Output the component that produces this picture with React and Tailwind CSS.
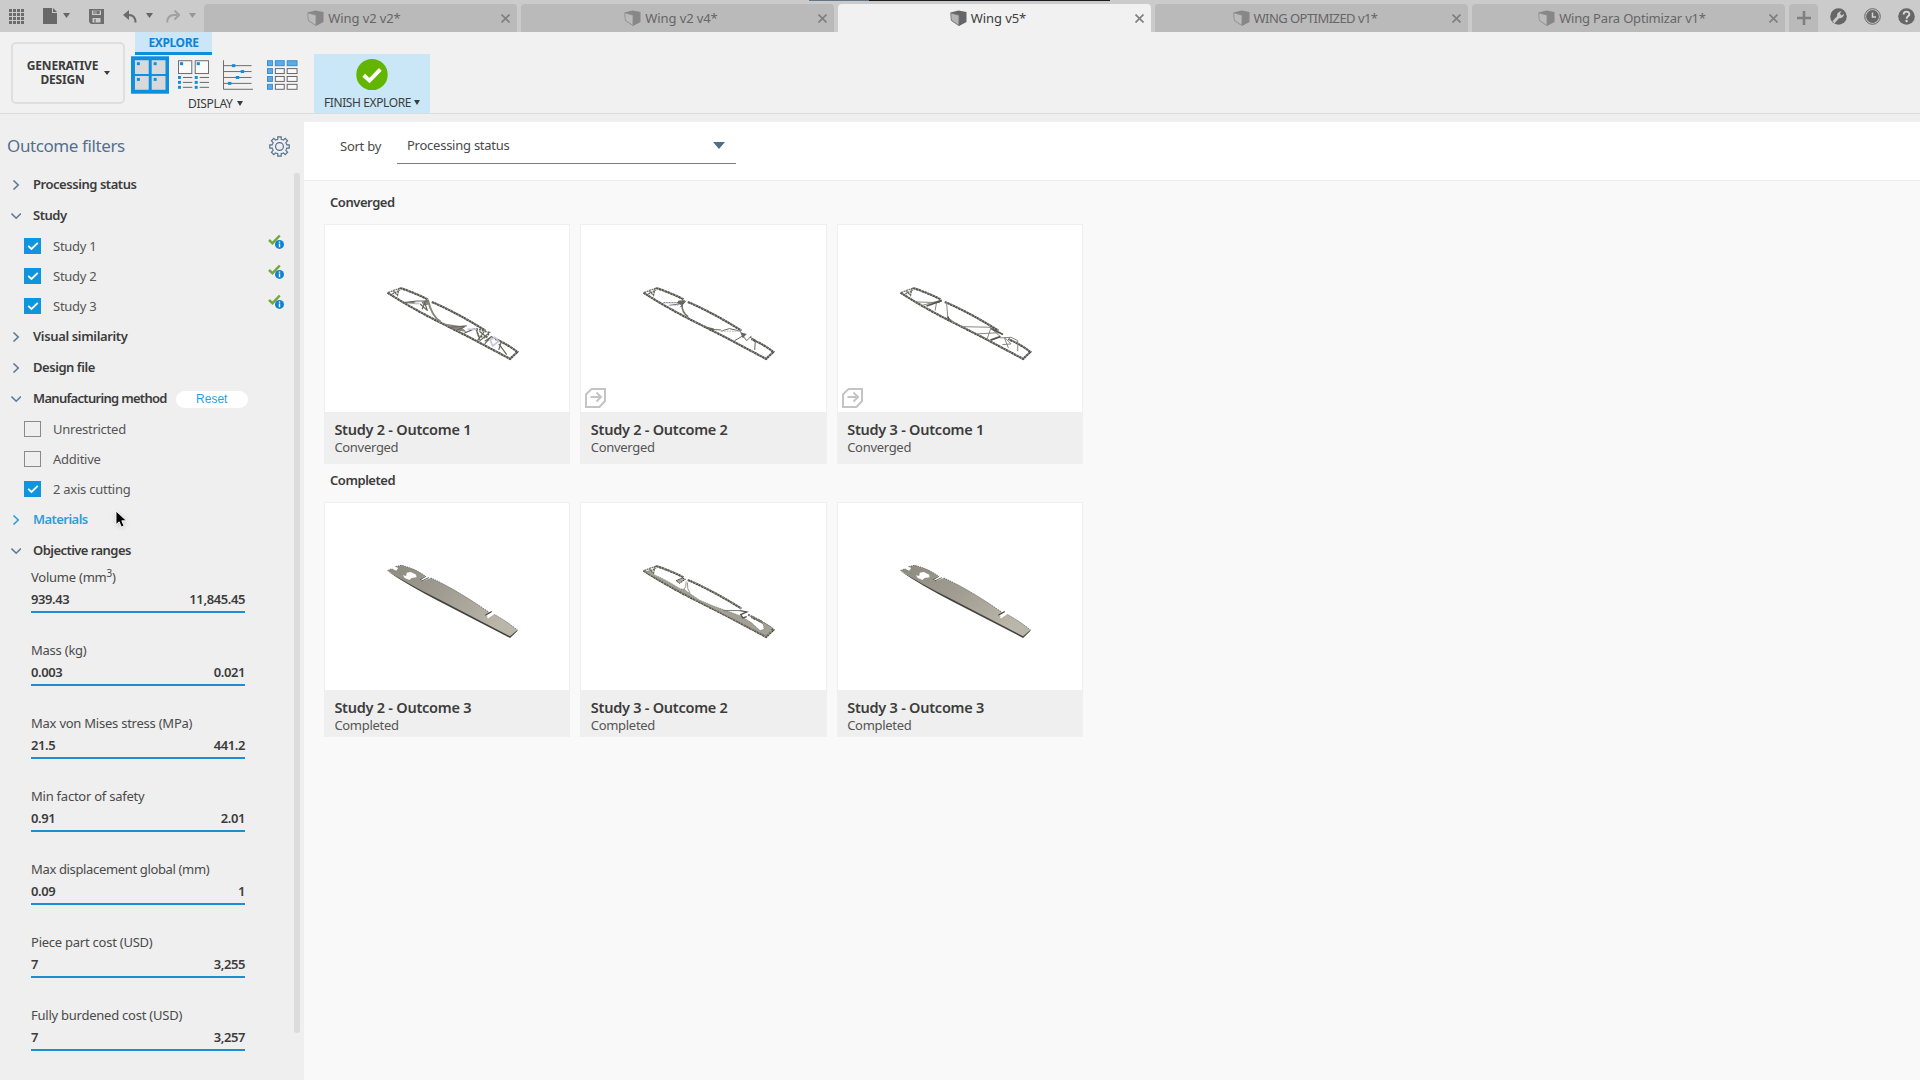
import React from "react";

const TABS = [
  { title: "Wing v2 v2*", tracking: "tracking-[-0.1px]" },
  { title: "Wing v2 v4*", tracking: "tracking-[-0.1px]" },
  { title: "Wing v5*", active: true, tracking: "tracking-[-0.1px]" },
  { title: "WING OPTIMIZED v1*", tracking: "tracking-[-0.55px]" },
  { title: "Wing Para Optimizar v1*", tracking: "tracking-[-0.18px]" },
];

const RANGES = [
  { label: <>Volume (mm<sup className="text-[10px]">3</sup>)</>, min: "939.43", max: "11,845.45" },
  { label: "Mass (kg)", min: "0.003", max: "0.021" },
  { label: "Max von Mises stress (MPa)", min: "21.5", max: "441.2" },
  { label: "Min factor of safety", min: "0.91", max: "2.01" },
  { label: "Max displacement global (mm)", min: "0.09", max: "1", tracking: "tracking-[-0.35px]" },
  { label: "Piece part cost (USD)", min: "7", max: "3,255" },
  { label: "Fully burdened cost (USD)", min: "7", max: "3,257" },
];

function Caret({ className = "" }) {
  return (
    <svg viewBox="0 0 8 5" className={className} fill="currentColor" preserveAspectRatio="none">
      <path d="M0 0H8L4 5Z" />
    </svg>
  );
}

function Cube({ active }) {
  return (
    <svg width="17" height="17" viewBox="0 0 17 17" className={active ? "" : "opacity-60"}>
      <path d="M0.5 2.5 8.5 0.5 16.5 2 16.5 12 9 16 1 10.5Z" fill="#666" />
      <path d="M0.8 3 9 5.2 8.8 15.4 1.3 10.3Z" fill={active ? "#b4b4b4" : "#bdbdbd"} stroke="#777" strokeWidth="0.7" />
    </svg>
  );
}

function TopBar() {
  return (
    <header className="relative flex h-8 bg-[#cbcbcb] text-[#666]">
      <div className="flex w-[204px] shrink-0 items-center">
        <svg width="15" height="15" viewBox="0 0 15 15" className="ml-[9px]" fill="#6b6b6b">
          {[0, 4, 8, 12].map((y) => [0, 4, 8, 12].map((x) => <rect key={`${x}-${y}`} x={x} y={y} width="3" height="3" />))}
        </svg>
        <svg width="14" height="16" viewBox="0 0 14 16" className="ml-[19px]" fill="#686868">
          <path d="M0 0H9V5H14V16H0Z M10 0 14 4H10Z" />
        </svg>
        <Caret className="mb-0.5 ml-1.5 h-[5px] w-[7px]" />
        <svg width="15" height="15" viewBox="0 0 15 15" className="ml-[19px]" fill="#6e6e6e">
          <path fillRule="evenodd" d="M0 0H15V15H2L0 13Z M3 1.5V6H12V1.5Z M3.5 9V13.5H11.5V9Z" />
          <path d="M4 1.5H11V5H4Z M5 10H7V13.5H5Z" opacity="0.6" />
          <path d="M8 2H10V5H8Z" />
        </svg>
        <svg width="14" height="13" viewBox="0 0 14 13" className="ml-[19px]" fill="none" stroke="#6b6b6b" strokeWidth="2.2">
          <path d="M12.5 12.5C12.6 7.5 10 5 6 5H3" />
          <path d="M6 0 0 5 6 10Z" fill="#6b6b6b" stroke="none" />
        </svg>
        <Caret className="mb-0.5 ml-[9px] h-[5px] w-[7px]" />
        <svg width="14" height="13" viewBox="0 0 14 13" className="ml-[13px]" fill="none" stroke="#a0a0a0" strokeWidth="2">
          <path d="M1.2 12.5C1.2 7.5 4 5 8 5H11" />
          <path d="M8.5 0.5 13 5 8.5 9.5" />
        </svg>
        <Caret className="mb-0.5 ml-[9px] h-[5px] w-[7px] text-[#979797]" />
      </div>
      <div className="flex shrink-0 gap-1 pt-1">
        {TABS.map((t) => (
          <div
            key={t.title}
            className={`relative flex w-[313px] items-center justify-center rounded-t-[4px] pt-px text-[13px] ${
              t.active ? "bg-[#f1f1f1] text-[#3c3c3c]" : "bg-[#bababa] text-[#666]"
            }`}
          >
            <div className="mr-[13px] flex items-center gap-1">
              <Cube active={t.active} />
              <span className={`whitespace-nowrap ${t.tracking}`}>{t.title}</span>
            </div>
            <svg width="9" height="9" viewBox="0 0 9 9" className="absolute right-[7px] top-[10px]" fill="none" stroke="#808080" strokeWidth="1.7">
              <path d="M0.5 0.5 8.5 8.5M8.5 0.5 0.5 8.5" />
            </svg>
          </div>
        ))}
        <div className="flex w-[29px] items-center justify-center rounded-t-[4px] bg-[#bababa]">
          <svg width="14" height="14" viewBox="0 0 14 14" fill="#808080">
            <path d="M5.7 0H8.3V5.7H14V8.3H8.3V14H5.7V8.3H0V5.7H5.7Z" />
          </svg>
        </div>
      </div>
      <div className="flex items-center gap-[17px] pl-[12px]">
        <svg width="17" height="17" viewBox="0 0 17 17">
          <circle cx="8.5" cy="8.5" r="8.3" fill="#666" />
          <path d="M3.5 14.2 8.5 8.8" stroke="#cbcbcb" strokeWidth="2.8" />
          <path d="M7.3 8.5C6.4 5.5 8.6 3 11.6 3.5L9.9 5.5 11.6 7.4 13.7 5.8C14.2 8.7 11.5 10.9 8.8 9.9Z" fill="#cbcbcb" />
        </svg>
        <svg width="17" height="17" viewBox="0 0 17 17" fill="none">
          <circle cx="8.5" cy="8.5" r="7.8" stroke="#666" strokeWidth="1" />
          <circle cx="8.5" cy="8.5" r="6.4" fill="#666" />
          <path d="M8.5 4.5V9H12" stroke="#d5d5d5" strokeWidth="1.5" />
        </svg>
        <svg width="17" height="17" viewBox="0 0 17 17" fill="none">
          <circle cx="8.5" cy="8.5" r="8.3" fill="#666" />
          <path d="M5.6 6.5C5.6 2.6 11.4 2.8 11.4 6.2 11.4 8.3 8.6 8.3 8.6 10.7" stroke="#d8d8d8" strokeWidth="1.9" />
          <circle cx="8.6" cy="13" r="1.2" fill="#d8d8d8" />
        </svg>
      </div>
      <div className="absolute left-[809px] top-0 flex h-px w-[301px]">
        <div className="w-[60px] bg-[#627784]" />
        <div className="flex-1 bg-[#1c1a1e]" />
      </div>
    </header>
  );
}

function DisplayIcons() {
  return (
    <div className="flex h-[38px]">
      <svg width="39" height="38" viewBox="0 0 39 38">
        <rect width="39" height="38" fill="#0d8fe0" />
        {[[4, 4], [21, 4], [4, 20], [21, 20]].map(([x, y]) => (
          <g key={`${x}-${y}`}>
            <rect x={x} y={y} width="14" height="14" fill="#d9d9d9" />
            <rect x={x + 2} y={y + 2} width="3" height="3" fill="#0d8fe0" />
          </g>
        ))}
      </svg>
      <svg width="32" height="31" viewBox="0 0 32 31" className="ml-[9px] mt-[4px]">
        {[0, 17].map((x) => (
          <g key={x}>
            <rect x={x + 0.5} y="0.5" width="13.5" height="13" fill="#fafafa" stroke="#6b6b6b" />
            <rect x={x + 2} y="2" width="3.2" height="3" fill="#0d8fe0" />
            {[16, 21, 26].map((y) => (
              <g key={y}>
                <rect x={x} y={y} width="3" height="3" fill="#0d8fe0" />
                <rect x={x + 5} y={y + 1} width="9.5" height="1" fill="#666" />
              </g>
            ))}
          </g>
        ))}
      </svg>
      <svg width="31" height="31" viewBox="0 0 31 31" className="ml-[13px] mt-[4px]">
        <path d="M0.5 0V29.5H31M1 5.5H29M1 11.5H29M1 17.5H29M1 23.5H29" fill="none" stroke="#6b6b6b" />
        {[[9, 4], [18, 10], [13, 16], [5, 22]].map(([x, y]) => (
          <rect key={y} x={x} y={y} width="3.5" height="3" fill="#0d8fe0" />
        ))}
      </svg>
      <svg width="32" height="31" viewBox="0 0 32 31" className="ml-[14px] mt-[4px]">
        {[0, 8, 16, 24].map((y) => (
          <g key={y}>
            <rect x="0.5" y={y + 0.5} width="5" height="5" fill="#5aabe8" stroke="#3b8ccc" />
            <rect x="8.5" y={y + 0.5} width="9" height="5" fill={y ? "#f8f8f8" : "#5aabe8"} stroke={y ? "#666" : "#3b8ccc"} />
            <rect x="20.5" y={y + 0.5} width="10" height="5" fill={y ? "#f8f8f8" : "#5aabe8"} stroke={y ? "#666" : "#3b8ccc"} />
          </g>
        ))}
      </svg>
    </div>
  );
}

function Ribbon() {
  return (
    <div className="flex h-[82px] border-b border-[#dcdcdc] bg-[#f1f1f1] text-[#3c3c3c]">
      <div className="ml-[11px] mt-[10px] flex h-[62px] w-[114px] items-center rounded-[5px] border-2 border-[#dfdfdf] pl-[12px]">
        <div className="w-[75px] text-center text-[12px] font-bold leading-[14px] tracking-[-0.2px]">
          GENERATIVE
          <br />
          DESIGN
        </div>
        <Caret className="ml-[4px] h-[4px] w-[6px]" />
      </div>
      <div className="ml-[6px] w-[168px]">
        <div className="ml-[4px] flex h-[23px] w-[77px] items-center justify-center border-b-[3px] border-[#0d8fdc] bg-[#cbe7f7] pt-[2px] text-[12px] font-bold tracking-[-0.4px] text-[#0d84d8]">
          EXPLORE
        </div>
        <div className="mt-px">
          <DisplayIcons />
        </div>
        <div className="flex h-[20px] items-center pl-[57px] text-[12px] tracking-[-0.3px]">
          DISPLAY
          <Caret className="mb-0.5 ml-1 h-[5px] w-[6px]" />
        </div>
      </div>
      <div className="ml-[15px] mt-[22px] flex h-[59px] w-[116px] flex-col items-center bg-[#c9e7f7]">
        <svg width="32" height="32" viewBox="0 0 32 32" className="mt-[5px]">
          <circle cx="16" cy="16" r="16" fill="#62b500" />
          <path d="M7.5 16.5 13.5 22 24.5 10.5" fill="none" stroke="#fff" strokeWidth="4" />
        </svg>
        <div className="mt-[3px] flex h-[20px] items-center whitespace-nowrap text-[12px] tracking-[-0.4px]">
          FINISH EXPLORE
          <Caret className="mb-0.5 ml-[3px] h-[5px] w-[6px]" />
        </div>
      </div>
    </div>
  );
}

function Chevron({ open, className = "text-[#5d7b99]" }) {
  return (
    <svg width="10" height="10" viewBox="0 0 10 10" className={`ml-[11px] mr-[12px] ${className}`} fill="none" stroke="currentColor" strokeWidth="1.6">
      <path d={open ? "M0.5 2.5 5.2 7.2 9.9 2.5" : "M2.5 0.5 7.2 5 2.5 9.5"} />
    </svg>
  );
}

function Group({ title, open, accent, tracking = "tracking-[-0.45px]", children }) {
  return (
    <div className="flex h-[31px] items-center text-[13px] font-semibold text-[#3c3c3c]">
      <Chevron open={open} className={accent ? "text-[#2c9fd8]" : "text-[#5d7b99]"} />
      <span className={`${tracking} ${accent ? "text-[#2c9fd8]" : ""}`}>{title}</span>
      {children}
    </div>
  );
}

function Option({ label, checked, status, tracking = "tracking-[-0.25px]" }) {
  return (
    <div className="flex h-[30px] items-center text-[13px] text-[#555]">
      <div className={`ml-[24px] flex h-[16px] w-[17px] items-center justify-center ${checked ? "bg-[#0f95de]" : "border border-[#8a8a8a]"}`}>
        {checked && (
          <svg width="12" height="10" viewBox="0 0 12 10" fill="none" stroke="#fff" strokeWidth="1.8">
            <path d="M1.2 4.8 4.5 8 10.8 1.8" />
          </svg>
        )}
      </div>
      <span className={`ml-[12px] pt-[2px] ${tracking}`}>{label}</span>
      {status && (
        <svg width="17" height="16" viewBox="0 0 17 16" className="mb-[9px] ml-auto mr-[19px]">
          <path d="M1 6 4.5 9.2 11.8 1.5" fill="none" stroke="#73a839" strokeWidth="2.4" />
          <circle cx="11.5" cy="10.4" r="4.5" fill="#0d84d0" />
          <path d="M11.5 7.5V8.8M11.5 9.6V13.2" stroke="#fff" strokeWidth="1.4" />
        </svg>
      )}
    </div>
  );
}

function Gear() {
  const teeth = [0, 45, 90, 135, 180, 225, 270, 315];
  return (
    <svg width="21" height="21" viewBox="-10.5 -10.5 21 21" fill="none" stroke="#54708f" strokeWidth="1.2">
      {teeth.map((a) => (
        <path key={a} transform={`rotate(${a})`} d="M-2.9 -6.9 -1.7 -7.3V-9.7H1.7V-7.3L2.9 -6.9" />
      ))}
      <circle r="3.9" />
    </svg>
  );
}

function Sidebar() {
  return (
    <aside className="relative w-[304px] shrink-0 bg-[#efefef]">
      <div className="flex h-[55px] items-center justify-between pl-[7px] pr-[14px] pt-[9px] text-[#54708f]">
        <h1 className="text-[17px] tracking-[-0.4px]">Outcome filters</h1>
        <Gear />
      </div>
      <Group title="Processing status" />
      <Group title="Study" open />
      <Option label="Study 1" checked status />
      <Option label="Study 2" checked status />
      <Option label="Study 3" checked status />
      <Group title="Visual similarity" tracking="tracking-[-0.35px]" />
      <Group title="Design file" />
      <Group title="Manufacturing method" open tracking="tracking-[-0.7px]">
        <button className="ml-[9px] mt-[2px] h-[17px] w-[72px] rounded-full bg-white font-['Liberation_Sans',sans-serif] text-[12px] font-normal leading-[17px] text-[#2c9fd8]">
          Reset
        </button>
      </Group>
      <Option label="Unrestricted" />
      <Option label="Additive" />
      <Option label="2 axis cutting" checked />
      <Group title="Materials" accent tracking="tracking-[-0.55px]" />
      <Group title="Objective ranges" open tracking="tracking-[-0.55px]" />
      <div className="ml-[31px] w-[214px] text-[13px] text-[#3c3c3c]">
        {RANGES.map((r) => (
          <div key={r.min + r.max} className="h-[73px]">
            <div className={`h-[23px] leading-[23px] text-[#4a4a4a] ${r.tracking || "tracking-[-0.24px]"}`}>{r.label}</div>
            <div className="flex h-[24px] justify-between border-b-2 border-[#1b8fd2] font-semibold leading-[20px] tracking-[-0.4px]">
              <span>{r.min}</span>
              <span>{r.max}</span>
            </div>
          </div>
        ))}
      </div>
      <div className="absolute left-[294px] top-[59px] h-[860px] w-[6px] rounded-b-[3px] rounded-t-[2px] bg-[#dcdcdc]" />
      <svg width="13" height="19" viewBox="0 0 13 19" className="absolute left-[115px] top-[396px] drop-shadow-sm">
        <path d="M1 1V14.5L4.2 11.8 6.3 17 9 15.9 6.8 10.8H11.5Z" fill="#000" stroke="#fff" strokeWidth="0.9" />
      </svg>
    </aside>
  );
}

/* Blade edges shared by all outcome previews, in units of a third of a pixel. */
const TOP_EDGE = "M90 54 Q128 66 172 88 M185 96Q260 128 346 182";
const LOW_EDGE = "M52 68Q120 112 205 155L300 203 420 267 442 246Q420 228 376 207";

function Lattice({ children, bold }) {
  return (
    <g fill="none">
      <path d={`${TOP_EDGE} ${LOW_EDGE}`} stroke="#4e4e49" strokeWidth="6.5" strokeDasharray="8 1" />
      <path d={`${TOP_EDGE} ${LOW_EDGE}`} stroke="#96948a" strokeWidth={bold ? 3 : 2} strokeDasharray="4 3" transform="translate(0 -1)" />
      <path d="M54 68 90 54M66 72 90 60M70 64 82 76 86 58" stroke="#6f6e67" strokeWidth="4" strokeDasharray="6 2" />
      {children}
    </g>
  );
}

function Solid() {
  return (
    <g>
      <path d="M52 70Q120 116 205 159L420 270 442 249V245L418 262 205 150Z" fill="#42423e" />
      <path
        fillRule="evenodd"
        fill="url(#metal)"
        d="M52 68 66 62 78 68 84 60 76 56 94 52Q135 62 165 84L152 94 160 98 182 90Q258 124 358 194L347 202 358 206 370 198Q410 220 442 246L420 265 205 153Q110 106 52 68Z M98 82 108 84 110 74 122 72 138 80 139 88 124 90 118 96 104 90Z"
      />
      <path
        fill="none"
        stroke="#55534c"
        strokeWidth="2.5"
        strokeDasharray="4 3"
        d="M52 68 66 62M76 56 94 52Q135 62 165 84M182 90Q258 124 358 194M370 198Q410 220 442 246"
      />
      <path d="M150 95 168 85M155 99 176 89" stroke="#44433f" strokeWidth="2.5" />
      <path d="M352 209 372 196" stroke="#fff" strokeWidth="6" />
      <path d="M346 202 365 191" stroke="#44433f" strokeWidth="3.5" />
    </g>
  );
}

function Wing({ kind }) {
  return (
    <svg viewBox="0 0 246 188" className="h-full w-full">
      <defs>
        <linearGradient id="metal" x1="0" y1="0" x2="1" y2="0.6">
          <stop offset="0" stopColor="#8d8a7f" />
          <stop offset="0.5" stopColor="#a19d92" />
          <stop offset="1" stopColor="#bab6a9" />
        </linearGradient>
      </defs>
      <g transform="translate(46 46) scale(0.333)">
        {kind === "solid" && <Solid />}
        {kind === "dense" && (
          <Lattice>
            <path d="M104 99 130 93 142 103Z M154 96 176 88 176 104 160 106Z M218 160 270 168 290 186 262 182Z" fill="#8b897f" />
            <path d="M174 92Q184 138 212 156" stroke="#8b887b" strokeWidth="6" />
            <path d="M318 176 358 188 348 204 325 198Z" stroke="#65645c" strokeWidth="5" strokeDasharray="6 3" />
            <path d="M102 98 140 93 176 93M150 102 172 122 164 100M166 94 156 118M240 172 290 168M262 180 284 170M282 190 314 176M318 176 330 212 356 190M322 212 342 186M344 214 364 200 394 214 386 240M364 200 344 222M386 222 410 254M328 184 350 202" stroke="#65645c" strokeWidth="3.5" />
            <path d="M132 100H148M292 178H320M360 210 374 202 386 214 368 228Z" stroke="#c5c8d8" strokeWidth="5" />
          </Lattice>
        )}
        {kind === "light" && (
          <Lattice>
            <path d="M156 92 176 90 176 98 166 106 154 100Z M342 186 362 192 350 205Z M232 168 264 176 258 182Z" fill="#68675f" />
            <path d="M168 104Q166 126 186 140" stroke="#77756a" strokeWidth="5" />
            <path d="M112 98 156 98M130 106 160 102M180 92 162 112M250 178 284 180M326 212 350 198 362 212 376 198M372 202 388 210 386 240M284 184 310 176 344 184" stroke="#65645c" strokeWidth="3" />
            <path d="M116 98H152M128 106H158M286 184H340" stroke="#c5c8d8" strokeWidth="4" strokeDasharray="5 3" />
          </Lattice>
        )}
        {kind === "truss" && (
          <Lattice>
            <path d="M100 96 170 98M118 106 176 90M160 98 156 122M190 96 194 142 216 160M234 170 324 172 312 208M280 192 352 188M320 172 352 200 324 212M352 204 384 202 404 212 404 244M364 202 384 222 358 224M376 234 364 204" stroke="#88867c" strokeWidth="3" />
            <path d="M130 108 176 92M194 140 198 152M324 176 360 194M322 210 352 200" stroke="#56554f" strokeWidth="5" />
          </Lattice>
        )}
        {kind === "shell" && (
          <Lattice bold>
            <path
              d="M54 70 72 68 84 80 110 92 132 104 162 122 174 124 190 136 220 156 262 174 300 188 344 204 376 224 402 248 414 244 412 232 404 218 440 240 420 264 205 153Z"
              fill="#a3a094"
              stroke="#6a685f"
              strokeWidth="1.5"
              strokeDasharray="4 2"
            />
            <path d="M180 100Q182 116 172 128M184 104Q182 124 192 136" stroke="#98968a" strokeWidth="3" />
            <path d="M150 98 168 90 178 94 160 106Z" fill="#aaa89e" stroke="#3d3d39" strokeWidth="3" strokeDasharray="5 2" />
            <path d="M342 188 362 192 344 200 350 210 362 206" stroke="#55544d" strokeWidth="4" />
            <path d="M366 200 406 220" stroke="#77756b" strokeWidth="6" strokeDasharray="6 2" />
            <path d="M292 188H346" stroke="#73747c" strokeWidth="3" />
          </Lattice>
        )}
      </g>
    </svg>
  );
}

function Card({ title, status, kind, exported }) {
  return (
    <article className="flex flex-col bg-[#efefef]">
      <div className="relative h-[188px] border border-b-0 border-[#efefef] bg-white">
        <div className="-m-px h-[188px]">
          <Wing kind={kind} />
        </div>
        {exported && (
          <svg width="21" height="20" viewBox="0 0 21 20" className="absolute bottom-[4px] left-[4px]" fill="none" stroke="#c4c4c4" strokeWidth="2">
            <path d="M6.5 1H20V13L14.5 19H1V6.5Z" />
            <path d="M5.5 9H15.5M11.5 4.5 16 9 11.5 13.5" />
          </svg>
        )}
      </div>
      <div className="pl-[10.4px] pt-[7px]">
        <h3 className="text-[14.5px] font-semibold leading-[20px] tracking-[-0.25px] text-[#3c3c3c]">{title}</h3>
        <p className="mt-px text-[13px] leading-[15px] tracking-[-0.3px] text-[#555]">{status}</p>
      </div>
    </article>
  );
}

function Section({ title, height, cards }) {
  return (
    <section>
      <h2 className="flex h-[20px] items-center pl-[6px] text-[13px] font-semibold tracking-[-0.45px] text-[#3c3c3c]">{title}</h2>
      <div className={`mt-[11px] grid grid-cols-[246.4px_246.4px_246.4px] gap-x-[10px] ${height}`}>
        {cards.map((c) => (
          <Card key={c.title} status={title} {...c} />
        ))}
      </div>
    </section>
  );
}

export default function App() {
  return (
    <div className="flex h-[1080px] w-[1920px] flex-col overflow-hidden bg-[#efefef] font-['Noto_Sans',sans-serif]">
      <TopBar />
      <Ribbon />
      <div className="flex min-h-0 flex-1">
        <Sidebar />
        <main className="mt-[8px] flex-1 bg-[#f9f9f9]">
          <div className="flex h-[59px] border-b border-[#ebebeb] bg-white text-[13px] text-[#4a4a4a]">
            <span className="mt-[14px] w-[93px] pl-[36px] leading-[20px] tracking-[-0.25px]">Sort by</span>
            <div className="flex h-[42px] w-[339px] items-center justify-between border-b border-[#7b7f84] pl-[10px] pr-[11px] pt-[6px]">
              <span className="tracking-[-0.25px]">Processing status</span>
              <Caret className="mb-px h-[7px] w-[12px] text-[#4f6d8c]" />
            </div>
          </div>
          <div className="flex flex-col gap-[7px] pl-[20px] pt-[12px]">
            <Section
              title="Converged"
              height="h-[240px]"
              cards={[
                { title: "Study 2 - Outcome 1", kind: "dense" },
                { title: "Study 2 - Outcome 2", kind: "light", exported: true },
                { title: "Study 3 - Outcome 1", kind: "truss", exported: true },
              ]}
            />
            <Section
              title="Completed"
              height="h-[235px]"
              cards={[
                { title: "Study 2 - Outcome 3", kind: "solid" },
                { title: "Study 3 - Outcome 2", kind: "shell" },
                { title: "Study 3 - Outcome 3", kind: "solid" },
              ]}
            />
          </div>
        </main>
      </div>
    </div>
  );
}
